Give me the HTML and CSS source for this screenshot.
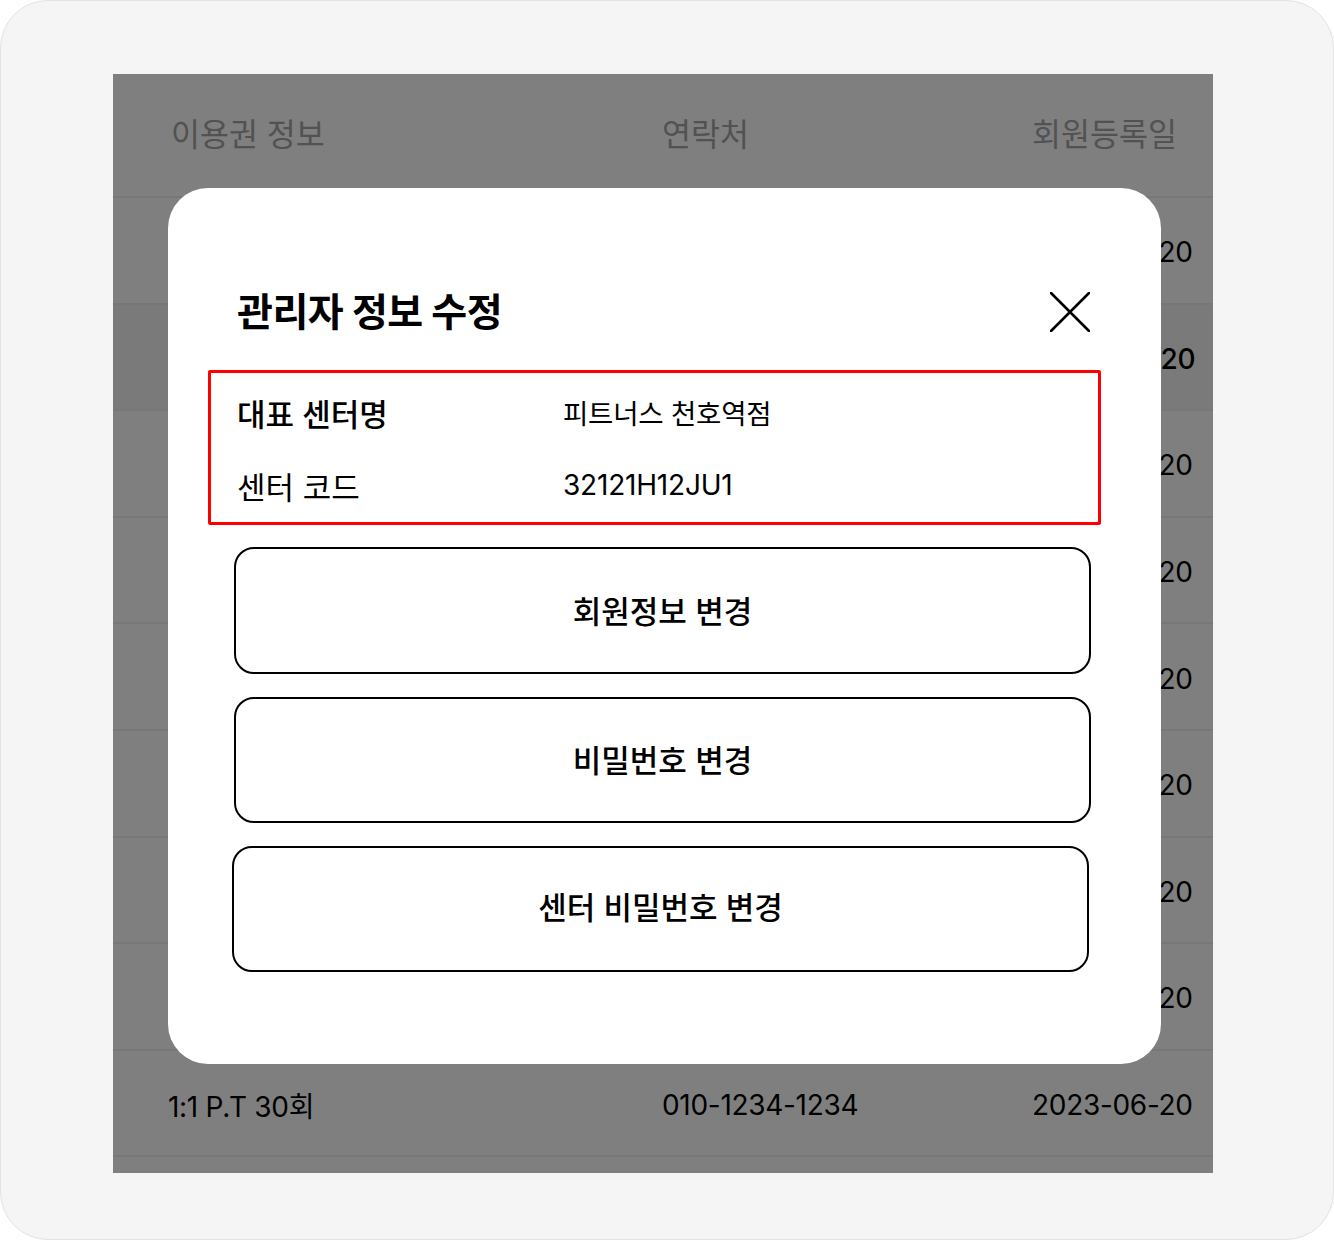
FILE: index.html
```html
<!DOCTYPE html>
<html lang="ko">
  <head>
    <meta charset="UTF-8" />
    <meta name="viewport" content="width=device-width, initial-scale=1.0" />
    <title>관리자 정보 수정</title>
    <link rel="stylesheet" href="styles.css">
  </head>
  <body>
    <div class="frame">
      <div class="screen">
        <div class="member-table">
          <div class="table-head">
            <span>이용권 정보</span>
            <span>연락처</span>
            <span>회원등록일</span>
          </div>
          <div class="table-row"><span>1:1 P.T 30회</span><span>010-1234-1234</span><span>2023-06-20</span></div>
          <div class="table-row active"><span>1:1 P.T 30회</span><span>010-1234-1234</span><span>2023-06-20</span></div>
          <div class="table-row"><span>1:1 P.T 30회</span><span>010-1234-1234</span><span>2023-06-20</span></div>
          <div class="table-row"><span>1:1 P.T 30회</span><span>010-1234-1234</span><span>2023-06-20</span></div>
          <div class="table-row"><span>1:1 P.T 30회</span><span>010-1234-1234</span><span>2023-06-20</span></div>
          <div class="table-row"><span>1:1 P.T 30회</span><span>010-1234-1234</span><span>2023-06-20</span></div>
          <div class="table-row"><span>1:1 P.T 30회</span><span>010-1234-1234</span><span>2023-06-20</span></div>
          <div class="table-row"><span>1:1 P.T 30회</span><span>010-1234-1234</span><span>2023-06-20</span></div>
          <div class="table-row"><span>1:1 P.T 30회</span><span>010-1234-1234</span><span>2023-06-20</span></div>
          <div class="table-row"><span></span><span></span><span></span></div>
        </div>

        <div class="overlay"></div>

        <div class="modal">
          <div class="modal-header">
            <h2 class="modal-title">관리자 정보 수정</h2>
            <button class="close-btn" type="button" aria-label="닫기">
              <svg width="40" height="40" viewBox="0 0 40 40">
                <path d="M1 1 L39 39 M39 1 L1 39" stroke="#000" stroke-width="2.6" stroke-linecap="round" fill="none" />
              </svg>
            </button>
          </div>

          <div class="center-info">
            <div class="info-row">
              <span class="info-label strong">대표 센터명</span>
              <span class="info-value">피트너스 천호역점</span>
            </div>
            <div class="info-row">
              <span class="info-label">센터 코드</span>
              <span class="info-value code">32121H12JU1</span>
            </div>
          </div>

          <div class="actions">
            <button class="action-btn" type="button">회원정보 변경</button>
            <button class="action-btn" type="button">비밀번호 변경</button>
            <button class="action-btn shifted" type="button">센터 비밀번호 변경</button>
          </div>
        </div>
      </div>
    </div>
  </body>
</html>
```

FILE: styles.css
```css
* {
  box-sizing: border-box;
  margin: 0;
  padding: 0;
}

body {
  font-family: Inter, "Noto Sans CJK KR", sans-serif;
  background-color: #fff;
  color: #000;
}

.frame {
  width: 1334px;
  height: 1240px;
  border: 1px solid #e2e2e2;
  border-radius: 48px;
  background-color: #f5f5f5;
  padding: 73px 0 0 112px;
}

.screen {
  position: relative;
  width: 1100px;
  height: 1099px;
  background-color: #fff;
  overflow: hidden;
}

/* table behind the dialog */
.table-head,
.table-row {
  display: grid;
  grid-template-columns: 494px 370px 1fr;
  align-items: center;
  padding-left: 55px;
  font-size: 28px;
  border-bottom: 2px solid #efefef;
}

.table-head {
  height: 124px;
  color: #a4a4a4;
  font-size: 31.5px;
  padding-bottom: 6px;
}

.table-head span:first-child {
  padding-left: 3px;
}

.table-row {
  height: 106.6px;
  padding-top: 4px;
  letter-spacing: -0.3px;
}

.table-row.active {
  background-color: #f5f5f5;
  font-weight: 500;
}

.overlay {
  position: absolute;
  inset: 0;
  background-color: rgba(0, 0, 0, 0.5);
}

/* dialog */
.modal {
  position: absolute;
  left: 55px;
  top: 114px;
  width: 993px;
  height: 876px;
  background-color: #fff;
  border-radius: 40px;
  padding-top: 104px;
}

.modal-header {
  display: flex;
  justify-content: space-between;
  align-items: center;
  height: 40px;
  margin: 0 71px 0 69px;
}

.modal-title {
  font-size: 39px;
  font-weight: 700;
  line-height: 40px;
  letter-spacing: -0.5px;
}

.close-btn {
  display: block;
  width: 40px;
  height: 40px;
  border: none;
  background: none;
  cursor: pointer;
}

.close-btn svg {
  display: block;
}

.center-info {
  margin: 38px 0 0 40px;
  width: 893px;
  height: 155px;
  border: 3px solid #ff0000;
  border-radius: 2px;
  padding: 20px 0 18px 26px;
  display: flex;
  flex-direction: column;
  gap: 35px;
}

.info-row {
  display: flex;
  align-items: center;
  height: 38px;
}

.info-label {
  width: 326px;
  font-size: 31px;
  font-weight: 400;
}

.info-label.strong {
  font-weight: 500;
}

.info-value {
  font-size: 27.5px;
  letter-spacing: -0.2px;
}

.info-value.code {
  font-size: 28px;
}

.actions {
  display: flex;
  flex-direction: column;
  gap: 23px;
  margin: 22px 0 0 66px;
}

.action-btn {
  width: 857px;
  height: 127px;
  border: 2px solid #000;
  border-radius: 20px;
  background-color: #fff;
  font-family: inherit;
  font-size: 31px;
  font-weight: 500;
  color: #000;
  padding-bottom: 3px;
  cursor: pointer;
}

.action-btn + .action-btn {
  height: 126px;
}

.action-btn.shifted {
  margin-left: -2px;
  padding-bottom: 8px;
}
```
